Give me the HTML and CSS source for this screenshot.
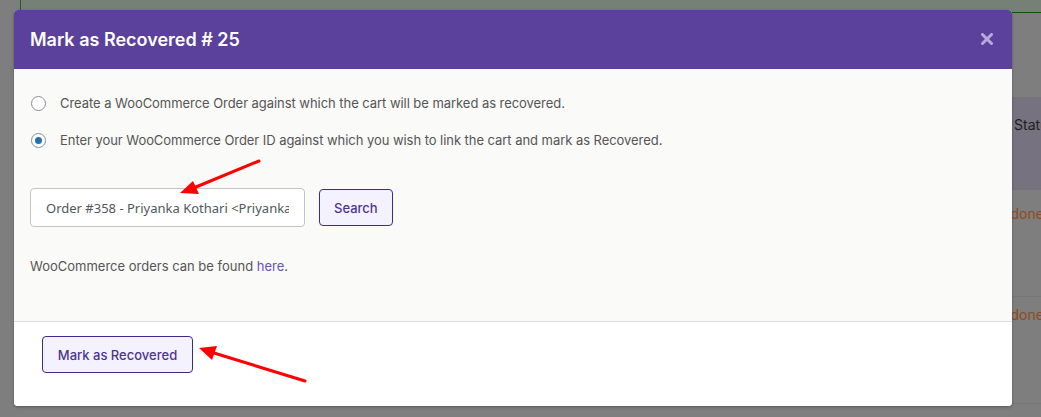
FILE: index.html
```html
<!DOCTYPE html>
<html lang="en">
<head>
    <meta charset="UTF-8">
    <meta name="viewport" content="width=device-width, initial-scale=1.0">
    <title>Mark as Recovered</title>
    <link rel="stylesheet" href="styles.css">
</head>
<body>
<div class="admin-page">
    <div class="admin-top"></div>
    <div class="list-table">
        <div class="list-head">Status</div>
        <div class="list-row"><span class="status">Abandoned</span></div>
        <div class="list-row"><span class="status">Abandoned</span></div>
    </div>
</div>

<div class="modal">
    <div class="modal-header">
        <h2>Mark as Recovered # 25</h2>
        <span class="modal-close">
            <svg width="12" height="12" viewBox="0 0 12 12"><path d="M1.5 1.5 L10.5 10.5 M10.5 1.5 L1.5 10.5" stroke="#b6aadd" stroke-width="3" stroke-linecap="round"/></svg>
        </span>
    </div>

    <div class="modal-body">
        <label class="radio-row">
            <input type="radio" name="recoverType" value="create">
            <span>Create a WooCommerce Order against which the cart will be marked as recovered.</span>
        </label>
        <label class="radio-row">
            <input type="radio" name="recoverType" value="link" checked>
            <span>Enter your WooCommerce Order ID against which you wish to link the cart and mark as Recovered.</span>
        </label>

        <div class="search-row">
            <input type="text" class="order-input" value="Order #358 - Priyanka Kothari &lt;Priyanka@example.com&gt;">
            <button class="btn">Search</button>
        </div>

        <p class="hint">WooCommerce orders can be found <a href="#">here</a>.</p>
    </div>

    <div class="modal-footer">
        <button class="btn btn-recover">Mark as Recovered</button>
    </div>
</div>

<!-- annotation arrows -->
<svg class="arrows" width="1041" height="417" viewBox="0 0 1041 417">
    <line x1="259" y1="161" x2="196" y2="187" stroke="#f00" stroke-width="3" stroke-linecap="round"/>
    <polygon points="180,193 193,181 199,194" fill="#f00"/>
    <line x1="305" y1="381" x2="214" y2="353" stroke="#f00" stroke-width="3" stroke-linecap="round"/>
    <polygon points="199,348 217,346 212,360" fill="#f00"/>
</svg>
</body>
</html>
```

FILE: styles.css
```css
body {
    margin: 0;
    width: 1041px;
    height: 417px;
    overflow: hidden;
    position: relative;
    background-color: #7e7e7e;
    font-family: 'Inter', 'Noto Sans', sans-serif;
}

.admin-top {
    height: 12px;
    margin-left: 20px;
    background-color: #778076;
    border-left: 1px solid #1f5c1f;
    border-bottom: 1px solid #104f10;
}

.list-table {
    margin-left: 990px;
    margin-top: 84px;
    border-top: 1px solid #747474;
}

.list-head {
    height: 92px;
    background-color: #76727f;
    color: #1e1e1e;
    font-size: 14px;
    padding-left: 24px;
    padding-top: 18px;
    box-sizing: border-box;
}

.list-row {
    height: 107px;
    padding-top: 13px;
    padding-left: 0;
    box-sizing: border-box;
    border-bottom: 1px solid #777;
    white-space: nowrap;
}

.list-row + .list-row {
    padding-top: 7px;
}

.status {
    color: #8f4a1c;
    font-size: 14px;
    margin-left: -14px;
}

.modal {
    position: absolute;
    left: 14px;
    top: 10px;
    width: 998px;
    height: 396px;
    border-radius: 4px;
    overflow: hidden;
    display: flex;
    flex-direction: column;
    background-color: #fff;
    box-shadow: 0 1px 3px rgba(0, 0, 0, 0.3);
}

.modal-header {
    height: 59px;
    flex-shrink: 0;
    background-color: #5b409c;
    display: flex;
    align-items: center;
    justify-content: space-between;
    padding: 0 19px 0 16px;
}

.modal-header h2 {
    margin: 0;
    color: #fff;
    font-size: 18px;
    font-weight: 600;
}

.modal-close {
    display: flex;
    margin-top: -2px;
}

.modal-body {
    flex: 1;
    background-color: #fafaf9;
    padding: 24px 16px 0 17px;
    border-bottom: 1px solid #dcdcde;
}

.radio-row {
    display: flex;
    align-items: center;
    height: 20px;
    margin-bottom: 17px;
    font-size: 13px;
    letter-spacing: -0.05px;
    color: #555;
}

.radio-row input {
    appearance: none;
    -webkit-appearance: none;
    width: 15px;
    height: 15px;
    margin: 0 14px 0 0;
    border: 1px solid #8c8f94;
    border-radius: 50%;
    background-color: #fff;
    display: flex;
    align-items: center;
    justify-content: center;
    flex-shrink: 0;
}

.radio-row input:checked {
    border-color: #7d8fa3;
}

.radio-row input:checked::before {
    content: '';
    width: 7px;
    height: 7px;
    border-radius: 50%;
    background-color: #2271b1;
}

.search-row {
    display: flex;
    align-items: center;
    gap: 14px;
    margin-top: 38px;
    margin-left: -1px;
}

.order-input {
    width: 275px;
    height: 39px;
    box-sizing: border-box;
    padding: 0 15px;
    border: 1px solid #c3c4c7;
    border-radius: 4px;
    background-color: #fff;
    font-family: 'Noto Sans', sans-serif;
    font-size: 13px;
    color: #50575e;
}

.btn {
    height: 37px;
    padding: 0 14px;
    border: 1px solid #3f2a8c;
    border-radius: 4px;
    background-color: #f5f2ff;
    color: #4b3593;
    font-family: 'Inter', sans-serif;
    font-size: 13px;
    font-weight: 500;
    cursor: pointer;
}

.hint {
    margin: 29px 0 0 -1px;
    font-size: 13px;
    line-height: 20px;
    color: #555;
}

.hint a {
    color: #6a50b3;
    text-decoration: none;
}

.modal-footer {
    height: 84px;
    flex-shrink: 0;
    background-color: #fff;
    padding: 14px 0 0 28px;
    box-sizing: border-box;
}

.btn-recover {
    width: 151px;
    padding: 0;
}

.arrows {
    position: absolute;
    left: 0;
    top: 0;
    pointer-events: none;
}
```
